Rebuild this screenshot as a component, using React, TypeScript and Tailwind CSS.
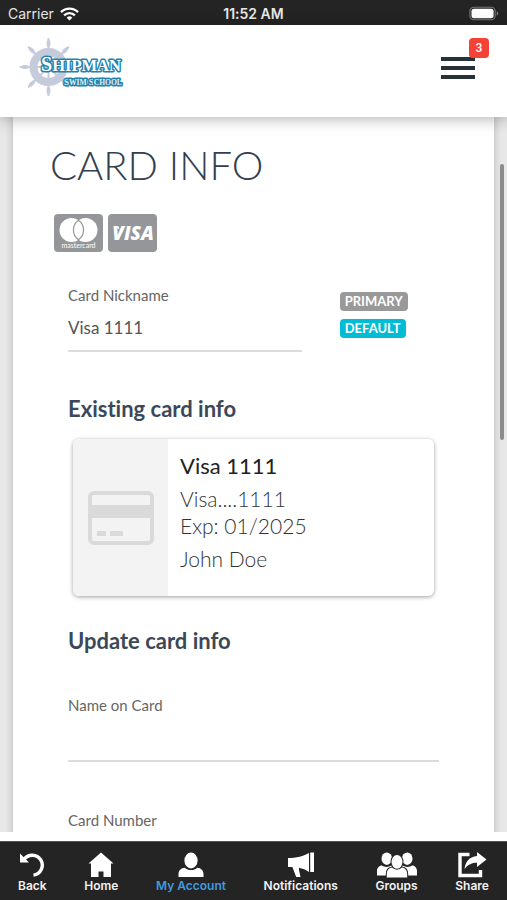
import type React from 'react';
import { useState } from 'react';

const navItems = [
  { key: 'back', label: 'Back' },
  { key: 'home', label: 'Home' },
  { key: 'account', label: 'My Account' },
  { key: 'notifications', label: 'Notifications' },
  { key: 'groups', label: 'Groups' },
  { key: 'share', label: 'Share' },
] as const;

type NavKey = (typeof navItems)[number]['key'];

const App: React.FC = () => (
  <div className="flex flex-col h-screen overflow-hidden bg-white font-['Lato',sans-serif] [font-variant-ligatures:none]">
    <StatusBar />
    <Header />
    <main className="relative flex-1 min-h-0 mb-[9px] overflow-hidden bg-[#e8e8e8] px-[13px]">
      <CardForm />
      {/* Scroll indicator */}
      <div className="absolute right-[3px] top-[47px] w-1 h-[276px] rounded-full bg-[#8c8c8c]" />
    </main>
    <BottomNav />
  </div>
);

const StatusBar: React.FC = () => (
  <div className="grid grid-cols-3 items-center h-[25px] shrink-0 pt-0.5 px-2 bg-[#242424] text-[#e8e8e8] text-sm leading-5 font-['Inter',sans-serif]">
    <div className="flex items-center gap-1.5">
      <span>Carrier</span>
      <svg width="19" height="14" viewBox="0 0 19 14" fill="none" stroke="#fff" strokeWidth="2.4">
        <path d="M1 5.2a12 12 0 0 1 17 0" />
        <path d="M4.1 8.3a7.7 7.7 0 0 1 10.8 0" />
        <path d="M9.5 13.6 6.6 10.7a4.1 4.1 0 0 1 5.8 0Z" fill="#fff" stroke="none" />
      </svg>
    </div>
    <span className="text-center font-semibold">11:52 AM</span>
    <svg className="justify-self-end" width="30" height="15" viewBox="0 0 31 15">
      <rect x="1" y="1" width="26" height="13" rx="4" fill="none" stroke="#77777a" strokeWidth="1.2" />
      <rect x="2.600" y="2.600" width="22.800" height="9.800" rx="2.600" fill="#fff" />
      <path d="M28.6 5.2v4.6c1-.4 1.7-1.3 1.7-2.3s-.7-1.9-1.7-2.3Z" fill="#77777a" />
    </svg>
  </div>
);

const Header: React.FC = () => (
  <header className="relative z-10 flex items-center justify-between h-[92px] shrink-0 pl-4 pr-8 bg-white shadow-[0_2px_14px_rgba(0,0,0,0.3)]">
    <a href="#home" aria-label="Shipman Swim School" className="-mt-2">
      <Logo />
    </a>
    <button type="button" aria-label="Menu" className="relative -mt-1.5">
      <svg width="34" height="24" viewBox="0 0 34 24" fill="#263238">
        <rect y="1" width="34" height="4" />
        <rect y="10" width="34" height="4" />
        <rect y="19" width="34" height="4" />
      </svg>
      <span className="absolute left-7 -top-[18px] flex items-center justify-center size-5 rounded bg-[#f44336] text-white text-xs font-['Roboto',sans-serif] font-medium">
        3
      </span>
    </button>
  </header>
);

const Logo: React.FC = () => (
  <svg width="112" height="64" viewBox="0 0 112 64">
    <g stroke="#c6cbdb" fill="none">
      <circle cx="32.500" cy="32" r="15" strokeWidth="8" />
      {[0, 45, 90, 135, 180, 225, 270, 315].map((angle) => (
        <g key={angle} transform={`rotate(${angle} 32.5 32)`}>
          <path d="M32.500 4v15" strokeWidth="2.200" strokeLinecap="round" />
          <path d="M32.500 7v3" strokeWidth="3.800" strokeLinecap="round" />
          <path d="M32.500 20v10" strokeWidth="2" />
        </g>
      ))}
      <circle cx="32.500" cy="32" r="3" fill="#c6cbdb" />
    </g>
    <g
      className="font-['Liberation_Serif',serif]"
      fontWeight="700"
      fill="#fff"
      stroke="#2583ac"
      strokeWidth="3"
      strokeLinejoin="round"
      paintOrder="stroke"
    >
      <text x="25" y="36" fontSize="20">
        S<tspan fontSize="16.500">HIPMAN</tspan>
      </text>
      <text x="48" y="50" fontSize="9" strokeWidth="3" fill="#dff2fa">
        S<tspan fontSize="7.600">WIM </tspan>S<tspan fontSize="7.600">CHOOL</tspan>
      </text>
    </g>
  </svg>
);

const CardForm: React.FC = () => {
  const [nickname, setNickname] = useState('Visa 1111');
  const [name, setName] = useState('');
  const [number, setNumber] = useState('');

  return (
    <form className="min-h-full bg-white pt-6 px-9 shadow-[0_0_8px_rgba(0,0,0,0.22)]">
      <h1 className="ml-px text-[40px] leading-[48px] font-light text-[#34404f]">CARD INFO</h1>
      <div className="flex gap-[5px] mt-[25px] ml-[5px]">
        <MastercardBadge />
        <VisaBadge />
      </div>

      <div className="px-[19px] pt-[33px]">
        <div className="flex">
          <div className="w-[63%]">
            <Field id="nickname" label="Card Nickname" value={nickname} onChange={setNickname} />
          </div>
          <div className="flex flex-col items-start gap-2 mt-[7px] ml-[38px] text-[13px] leading-[19px] font-bold text-white">
            <span className="px-[5px] rounded bg-[#999]">PRIMARY</span>
            <span className="px-[5px] rounded bg-[#00bcd4]">DEFAULT</span>
          </div>
        </div>

        <h2 className="mt-[43px] text-[22px] leading-7 font-bold text-[#3c4858]">
          Existing card info
        </h2>
        <div className="flex h-[157px] mt-4 mx-[5px] rounded-md overflow-hidden bg-white shadow-[0_1px_4px_rgba(0,0,0,0.38)]">
          <div className="flex items-center justify-center w-[95px] shrink-0 bg-[#f3f3f3]">
            <svg width="66" height="54" viewBox="0 0 66 54">
              <rect x="2" y="2" width="62" height="50" rx="4" fill="#f3f3f3" stroke="#dadada" strokeWidth="4" />
              <path d="M2 14h62v13H2z" fill="#dadada" />
              <path d="M9 40h9v5H9zM22 40h13v5H22z" fill="#dadada" />
            </svg>
          </div>
          <div className="pt-[13px] pl-3 text-[21px] leading-[27px] font-light text-[#333]">
            <p className="text-[22px] font-normal text-[#222]">Visa 1111</p>
            <p className="mt-1.5">
              Visa....1111
              <br />
              Exp: 01/2025
            </p>
            <p className="mt-1.5">John Doe</p>
          </div>
        </div>

        <h2 className="mt-[31px] mb-10 text-[22px] leading-7 font-bold text-[#3c4858]">
          Update card info
        </h2>
        <Field id="name" label="Name on Card" value={name} onChange={setName} />
        <div className="mt-12">
          <Field id="number" label="Card Number" value={number} onChange={setNumber} />
        </div>
      </div>
    </form>
  );
};

const Field: React.FC<{
  id: string;
  label: string;
  value: string;
  onChange: (value: string) => void;
}> = ({ id, label, value, onChange }) => (
  <div>
    <label htmlFor={id} className="block text-[15px] leading-5 text-[#666]">
      {label}
    </label>
    <input
      id={id}
      value={value}
      onChange={(e) => onChange(e.target.value)}
      className="block w-full h-[47px] border-b-2 border-[#dcdcdc] outline-none text-[17px] text-[#555]"
    />
  </div>
);

const MastercardBadge: React.FC = () => (
  <svg width="49" height="38" viewBox="0 0 49 38">
    <rect width="49" height="38" rx="4" fill="#95969a" />
    <circle cx="17.500" cy="16" r="12" fill="#fff" />
    <circle cx="31.500" cy="16" r="12" fill="#fff" />
    <path
      d="M24.500 6.200a12 12 0 0 1 0 19.600a12 12 0 0 1 0-19.600Z"
      fill="#fff"
      stroke="#95969a"
      strokeWidth="1.200"
    />
    <text
      x="24.500"
      y="34"
      textAnchor="middle"
      fontSize="7"
      fill="#fff"
      className="font-['Lato',sans-serif]"
    >
      mastercard
    </text>
  </svg>
);

const VisaBadge: React.FC = () => (
  <svg width="49" height="38" viewBox="0 0 49 38">
    <rect width="49" height="38" rx="4" fill="#95969a" />
    <path d="M4.500 12.200h6l1 3.600c-1.400-1.700-3.600-3-7-3.600Z" fill="#fff" />
    <text
      x="25"
      y="26"
      textAnchor="middle"
      fontSize="19"
      fontWeight="800"
      fontStyle="italic"
      fill="#fff"
      className="font-['Open_Sans',sans-serif]"
    >
      VISA
    </text>
  </svg>
);

const NavIcon: React.FC<{ name: NavKey }> = ({ name }) => {
  switch (name) {
    case 'back':
      return (
        <svg width="26" height="26" viewBox="0 0 26 26">
          <path d="M5 7.500a10 10 0 1 1 9.500 15.600" fill="none" stroke="#fff" strokeWidth="3.400" />
          <path d="M1 1.500v9h9Z" fill="#fff" />
        </svg>
      );
    case 'home':
      return (
        <svg width="26" height="26" viewBox="0 0 26 26" fill="#fff">
          <path d="M13 .5 25.500 11.500H23V25h-7.500v-5.500h-5V25H3V11.500H.5Z" />
        </svg>
      );
    case 'account':
      return (
        <svg width="26" height="26" viewBox="0 0 26 26" fill="#fff">
          <ellipse cx="13" cy="8.500" rx="6.600" ry="7.900" />
          <path d="M.5 25v-3c0-3.500 2.500-6 6.200-6.300 1.700 1.400 3.800 2.300 6.300 2.300s4.600-.9 6.300-2.300c3.700.3 6.200 2.800 6.200 6.300v3Z" />
        </svg>
      );
    case 'notifications':
      return (
        <svg width="28" height="26" viewBox="0 0 28 26" fill="#fff">
          <path d="M1 6c8 0 16-2 21-5v19c-3-2-6.500-3.500-10-4.200V18l1.500 7H9.200L5.400 15H1Z" />
          <path d="M23.200 .5h3.800v19.500h-3.800z" />
        </svg>
      );
    case 'groups':
      return (
        <svg width="40" height="26" viewBox="0 0 40 26" fill="#fff">
          <ellipse cx="9.800" cy="6.700" rx="5.300" ry="6.200" />
          <ellipse cx="30.200" cy="6.700" rx="5.300" ry="6.200" />
          <path d="M0 23.500V19c0-3 2-5.500 5-5.500 1.300 1 2.800 1.400 4.500 1.400s3.200-.4 4.500-1.400h12c1.300 1 2.800 1.400 4.500 1.400s3.200-.4 4.500-1.400c3 0 5 2.500 5 5.500v4.500Z" />
          <path
            d="M9.800 25.500V22c0-4 2.200-6.300 5.200-6.600 1.400 1.100 3.100 1.700 5 1.700s3.600-.6 5-1.700c3 .3 5.200 2.600 5.200 6.600v3.500Z"
            stroke="#242424"
            strokeWidth="2"
            paintOrder="stroke"
          />
          <ellipse cx="20" cy="9.800" rx="5.500" ry="6.900" stroke="#242424" strokeWidth="2" paintOrder="stroke" />
        </svg>
      );
    case 'share':
      return (
        <svg width="30" height="26" viewBox="0 0 30 26">
          <path d="M12.500 2.500H3v21h20.500V18" fill="none" stroke="#fff" strokeWidth="3.400" />
          <path d="M20 0l9.500 7.500L20 15v-4.200c-5 0-9 1.700-12.500 6.200.8-7 4.500-12.200 12.500-13Z" fill="#fff" />
        </svg>
      );
  }
};

const BottomNav: React.FC = () => (
  <nav className="flex items-start justify-between h-[59px] shrink-0 pt-[10px] px-[18px] border-t border-[#555] bg-[#242424]">
    {navItems.map(({ key, label }) => (
      <button
        key={key}
        type="button"
        className={`flex flex-col items-center text-xs font-semibold font-['Inter',sans-serif] ${
          key === 'account' ? 'text-[#3d9be0]' : 'text-[#f2f2f2]'
        }`}
      >
        <NavIcon name={key} />
        <span>{label}</span>
      </button>
    ))}
  </nav>
);

export default App;
